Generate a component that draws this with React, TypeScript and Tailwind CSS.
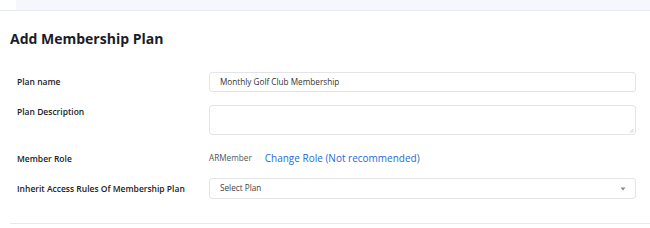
const font = { fontFamily: '"Open Sans", "Liberation Sans", sans-serif' };

function Row({ label, children, align = "center" }: { label: string; children: React.ReactNode; align?: "center" | "start" }) {
  return (
    <div className={`flex ${align === "start" ? "items-start" : "items-center"}`}>
      <div className="w-[209px] shrink-0 pl-[17px] whitespace-nowrap text-[8.5px] leading-[14px] font-semibold text-[#222]">{label}</div>
      <div className="flex-1">{children}</div>
    </div>
  );
}

export default function App() {
  return (
    <div className="w-[650px] h-[228px] bg-white overflow-hidden" style={font}>
      <div className="h-[11px] flex border-b border-[#e6eaf3]">
        <div className="w-[16px] bg-white" />
        <div className="flex-1 bg-[#f5f7fc]" />
      </div>

      <h1 className="pl-[10px] pt-[19px] text-[14px] font-bold text-[#1b1c2a] leading-[18px]">Add Membership Plan</h1>

      <div className="mt-[24px] pr-[14px] flex flex-col">
        <Row label="Plan name">
          <div className="h-[20px] rounded-[3px] border border-[#e2e4e9] flex items-center px-[10px] text-[8.2px] text-[#333]">
            Monthly Golf Club Membership
          </div>
        </Row>

        <div className="mt-[13px]">
          <Row label="Plan Description" align="start">
            <div className="h-[30px] rounded-[3px] border border-[#e2e4e9] relative">
              <svg className="absolute right-[1px] bottom-[1px]" width="5" height="5" viewBox="0 0 5 5">
                <path d="M4.5 1 L1 4.5 M4.5 3 L3 4.5" stroke="#aaa" strokeWidth="0.6" />
              </svg>
            </div>
          </Row>
        </div>

        <div className="mt-[16px]">
          <Row label="Member Role">
            <div className="flex items-center gap-[13px]">
              <span className="text-[8.2px] text-[#555]">ARMember</span>
              <span className="text-[10px] text-[#1f6bd6]">Change Role (Not recommended)</span>
            </div>
          </Row>
        </div>

        <div className="mt-[12px]">
          <Row label="Inherit Access Rules Of Membership Plan">
            <div className="h-[21px] rounded-[3px] border border-[#e2e4e9] flex items-center justify-between pl-[10px] pr-[9px] text-[8.2px] text-[#444]">
              <span>Select Plan</span>
              <svg width="6" height="4" viewBox="0 0 6 4">
                <path d="M0.5 0.5 L5.5 0.5 L3 3.5 Z" fill="#888" />
              </svg>
            </div>
          </Row>
        </div>
      </div>

      <div className="mt-[24px] ml-[10px] border-t border-[#e9e9ec]" />
    </div>
  );
}
